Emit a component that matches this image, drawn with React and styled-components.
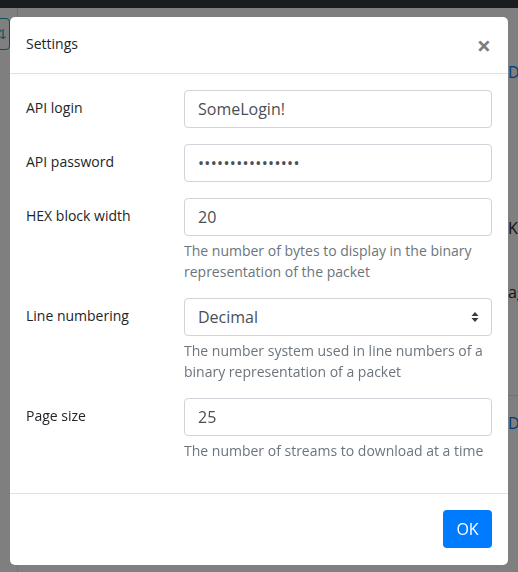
import styled, { createGlobalStyle } from "styled-components";

const GlobalStyle = createGlobalStyle`
    html, body {
        margin: 0;
        padding: 0;
        height: 100%;
        overflow: hidden;
    }
    body {
        font-family: "Open Sans", "Noto Sans", "Liberation Sans", sans-serif;
        color: #212529;
        background: #fff;
    }
    * {
        box-sizing: border-box;
    }
`

const fields = [
    { label: "API login", value: "SomeLogin!" },
    { label: "API password", value: "••••••••••••••••", password: true },
    { label: "HEX block width", value: "20", help: "The number of bytes to display in the binary representation of the packet" },
    { label: "Line numbering", value: "Decimal", select: true, help: "The number system used in line numbers of a binary representation of a packet" },
    { label: "Page size", value: "25", help: "The number of streams to download at a time" },
]

export default function App () {
    return (
        <>
            <GlobalStyle />
            <Page>
                <NavBar />
                <PageBody>
                    <SideTool>
                        <ToolButton>⇅</ToolButton>
                    </SideTool>
                    <PageMain>
                        <PageText $top={54} $link>Do</PageText>
                        <PageText $top={136}>Kt</PageText>
                        <PageText $top={44}>ag</PageText>
                        <PageRule $top={93} />
                        <PageText $top={17} $link>Do</PageText>
                    </PageMain>
                </PageBody>
            </Page>
            <Backdrop />
            <Dialog>
                <Header>
                    <Title>Settings</Title>
                    <Close>&times;</Close>
                </Header>
                <Body>
                    {fields.map(f => (
                        <FormRow key={f.label}>
                            <Label>{f.label}</Label>
                            <Field>
                                {f.select ? (
                                    <Select>
                                        <span>{f.value}</span>
                                        <Caret viewBox="0 0 8 12">
                                            <path d="M4 1 L7.5 5 H0.5 Z M4 11 L0.5 7 H7.5 Z" fill="#343a40" />
                                        </Caret>
                                    </Select>
                                ) : (
                                    <Input $password={f.password}>{f.value}</Input>
                                )}
                                {f.help && <Help>{f.help}</Help>}
                            </Field>
                        </FormRow>
                    ))}
                </Body>
                <Footer>
                    <OkButton>OK</OkButton>
                </Footer>
            </Dialog>
        </>
    )
}

const Page = styled.div`
    height: 100vh;
    display: flex;
    flex-direction: column;
`

const NavBar = styled.div`
    height: 8px;
    background: #343a40;
`

const PageBody = styled.div`
    flex: 1;
    display: flex;
`

const SideTool = styled.div`
    width: 18px;
    border-right: 1px solid #dee2e6;
    padding-top: 10px;
`

const ToolButton = styled.div`
    width: 24px;
    height: 32px;
    margin-left: -14px;
    border: 1px solid #17a2b8;
    border-radius: 4px;
    color: #17a2b8;
    font-size: 14px;
    line-height: 30px;
    text-align: right;
    padding-right: 2px;
`

const PageMain = styled.div`
    flex: 1;
    display: flex;
    flex-direction: column;
    align-items: flex-end;
`

const PageText = styled.div`
    margin-top: ${p => p.$top}px;
    width: 10px;
    overflow: hidden;
    white-space: nowrap;
    font-size: 16px;
    line-height: 20px;
    color: ${p => p.$link ? "#007bff" : "#212529"};
`

const PageRule = styled.div`
    margin-top: ${p => p.$top}px;
    width: 10px;
    border-top: 1px solid #dee2e6;
`

const Backdrop = styled.div`
    position: fixed;
    inset: 0;
    background: rgba(0, 0, 0, 0.5);
`

const Dialog = styled.div`
    position: fixed;
    top: 17px;
    left: 10px;
    width: 498px;
    background: #fff;
    border-radius: 5px;
    display: flex;
    flex-direction: column;
`

const Header = styled.div`
    display: flex;
    align-items: center;
    justify-content: space-between;
    padding: 16px;
    border-bottom: 1px solid #dee2e6;
    height: 57px;
`

const Title = styled.div`
    font-size: 14px;
    line-height: 22px;
    margin-top: -2px;
`

const Close = styled.div`
    font-size: 25px;
    font-weight: 700;
    line-height: 1;
    color: #000;
    opacity: 0.5;
    margin-right: 1px;
    margin-top: 1px;
`

const Body = styled.div`
    padding: 16px 16px 0;
    border-bottom: 1px solid #dee2e6;
`

const FormRow = styled.div`
    display: grid;
    grid-template-columns: 158px 308px;
    margin-bottom: 16px;
    &:last-child {
        margin-bottom: 32px;
    }
`

const Label = styled.div`
    font-size: 14px;
    line-height: 22px;
    padding-top: 7px;
`

const Field = styled.div`
    display: flex;
    flex-direction: column;
`

const Input = styled.div`
    height: 38px;
    border: 1px solid #ced4da;
    border-radius: 4px;
    padding: 6px 13px;
    font-size: 16px;
    line-height: 24px;
    color: #495057;
    letter-spacing: ${p => p.$password ? "0.35px" : "normal"};
`

const Select = styled.div`
    height: 38px;
    border: 1px solid #ced4da;
    border-radius: 4px;
    padding: 6px 13px;
    font-size: 16px;
    line-height: 24px;
    color: #495057;
    display: flex;
    align-items: center;
    justify-content: space-between;
`

const Caret = styled.svg`
    width: 8px;
    height: 12px;
    margin-right: -1px;
`

const Help = styled.div`
    margin-top: 4px;
    font-size: 14px;
    line-height: 21px;
    color: #6c757d;
`

const Footer = styled.div`
    display: flex;
    justify-content: flex-end;
    padding: 16px;
    height: 71px;
`

const OkButton = styled.div`
    width: 49px;
    height: 38px;
    background: #007bff;
    border-radius: 4px;
    color: #fff;
    font-size: 16px;
    line-height: 38px;
    text-align: center;
`
